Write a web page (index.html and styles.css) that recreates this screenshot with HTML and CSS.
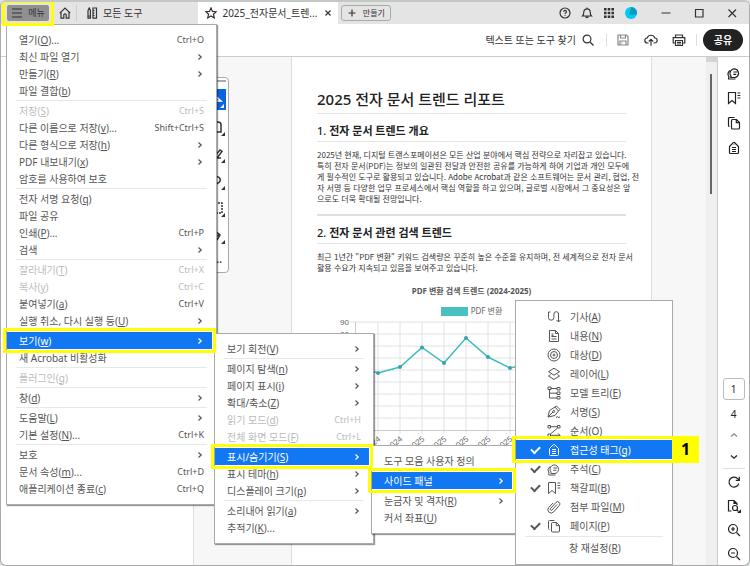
FILE: index.html
```html
<!DOCTYPE html>
<html lang="ko">
<head>
  <meta charset="UTF-8">
  <meta name="viewport" content="width=device-width, initial-scale=1.0">
  <title>2025_전자문서_트렌드</title>
  <link rel="stylesheet" href="styles.css">
</head>
<body>
  <!-- Shared icons -->
  <svg class="sprite" aria-hidden="true">
    <symbol id="chev" viewBox="0 0 6 8"><path d="M1.5 1.5 4.2 4 1.5 6.5"/></symbol>
    <symbol id="comment" viewBox="0 0 14 14"><path d="M4.200 10.300a4.300 4.300 0 1 1 3.800 1.200H4.200c-.6 0-.7-.4-.4-.8z"/><path d="M2.800 4.500A5 5 0 0 0 2 11l-.5 1.300c-.1.4.1.700.5.700h6.500M6.300 6h4M6.300 8.300h3"/></symbol>
    <symbol id="bookmark" viewBox="0 0 14 14"><path d="M1.5 1.5h7v11L5 9.500l-3.500 3zM10.500 2h2.800M10.500 4.500h2.800M10.500 7h2.800"/></symbol>
    <symbol id="pages" viewBox="0 0 14 14"><path d="M5.500 3.500h4l3 3v5.500a1 1 0 0 1-1 1h-6a1 1 0 0 1-1-1V4.500a1 1 0 0 1 1-1zM9.300 3.500v3.200h3.200M2.500 10.500a1 1 0 0 1-1-1v-7a1 1 0 0 1 1-1h5"/></symbol>
    <symbol id="tag" viewBox="0 0 14 14"><path d="M2.500 5.500 6.300 1.700a1 1 0 0 1 1.400 0l3.800 3.800v6a1 1 0 0 1-1 1h-7a1 1 0 0 1-1-1zM5 6.500h4M5 8.500h4M5 10.500h4M7 3.500v.6"/></symbol>
  </svg>

  <div class="window">
    <!-- Title bar -->
    <header class="titlebar">
      <div class="menu-frame marked">
        <button class="menu-btn">
          <svg class="icon" viewBox="0 0 12 12"><path d="M1 2h10M1 6h10M1 10h10"/></svg>메뉴
        </button>
      </div>
      <button class="home" aria-label="홈">
        <svg class="icon" viewBox="0 0 12 12"><path d="M.8 6.200 6 1l5.200 5.200M2 5.500v5.700h2.800V8a1.200 1.200 0 0 1 2.400 0v3.200H10V5.500"/></svg>
      </button>
      <button class="tools">
        <svg class="icon" viewBox="0 0 12 12"><path d="M2 3.500 3.200 1l1.200 2.500v7.700H2zM2 9h2.400M7 1h3.500v10.200H7zM7 3.500h1.500M7 6h1.500M7 8.500h1.500"/></svg>모든 도구
      </button>
      <div class="tab">
        <svg class="icon" viewBox="0 0 12 12"><path d="m6 .9 1.500 3.500 3.700.3-2.800 2.500.9 3.700L6 8.900l-3.300 2 .9-3.700L.8 4.700l3.700-.3z"/></svg>
        <span>2025_전자문서_트렌...</span>
        <button aria-label="탭 닫기"><svg class="icon tiny" viewBox="0 0 8 8"><path d="m1.500 1.500 5 5m0-5-5 5"/></svg></button>
      </div>
      <button class="create"><svg class="icon tiny" viewBox="0 0 8 8"><path d="M4 .5v7M.5 4h7"/></svg>만들기</button>

      <div class="account">
        <button aria-label="도움말"><svg class="icon" viewBox="0 0 12 12"><circle cx="6" cy="6" r="5"/><path d="M4.600 4.800a1.400 1.400 0 1 1 2.100 1.200c-.5.3-.7.500-.7 1M6 8.300v.7"/></svg></button>
        <button aria-label="알림"><svg class="icon" viewBox="0 0 12 12"><path d="M1.500 9c1.200-1 1.300-2 1.300-4a3.200 3.200 0 0 1 6.400 0c0 2 .1 3 1.300 4zM4.800 9.500a1.200 1.200 0 0 0 2.400 0M6 .6v1"/></svg></button>
        <button aria-label="앱"><svg class="icon solid" viewBox="0 0 12 12"><path d="M1 1h2.600v2.600H1zM4.700 1h2.600v2.600H4.700zM8.400 1H11v2.600H8.400zM1 4.700h2.600v2.600H1zM4.700 4.700h2.600v2.600H4.700zM8.400 4.700H11v2.600H8.400zM1 8.400h2.600V11H1zM4.700 8.400h2.600V11H4.700zM8.400 8.400H11V11H8.400z"/></svg></button>
        <button aria-label="프로필"><svg class="avatar" viewBox="0 0 12 12"><circle cx="6" cy="6" r="6" fill="#00c8f8"/><path d="M6 0a6 6 0 0 1 5.800 7.500L4 8z" fill="#0b9dbd"/></svg></button>
      </div>
      <div class="controls">
        <button aria-label="최소화"><svg class="icon" viewBox="0 0 12 12"><path d="M1.500 6h9"/></svg></button>
        <button aria-label="최대화"><svg class="icon" viewBox="0 0 12 12"><path d="M2.500 2.500h7.500v7.500H2.500z"/></svg></button>
        <button aria-label="닫기"><svg class="icon" viewBox="0 0 12 12"><path d="m2.500 2.500 7.500 7.500m0-7.500L2.500 10"/></svg></button>
      </div>
    </header>

    <!-- Toolbar -->
    <div class="toolbar">
      <button class="search">텍스트 또는 도구 찾기
        <svg class="icon" viewBox="0 0 12 12"><circle cx="5" cy="5" r="3.900"/><path d="m8 8 3.500 3.500"/></svg>
      </button>
      <button class="save" aria-label="저장"><svg class="icon" viewBox="0 0 12 12"><path d="M1 1h8.500L11 2.500V11H1zM3.500 1v3h5V1M3 11V7h6v4M5 8.500v1"/></svg></button>
      <button class="upload" aria-label="업로드"><svg class="icon wide" viewBox="0 0 14 12"><path d="M4.500 9H3.500a2.500 2.500 0 0 1-.3-5A4 4 0 0 1 10.800 4a2.500 2.500 0 0 1-.3 5h-1M7 11.800V5.500M4.800 7.500 7 5.300l2.200 2.200"/></svg></button>
      <button class="print" aria-label="인쇄"><svg class="icon wide" viewBox="0 0 14 12"><path d="M3.500 3.500V1h7v2.500M3.500 9H1.200V3.700h11.600V9h-2.300M3.500 6.500h7v5h-7zM5 8.300h4M5 10h4"/></svg></button>
      <button class="share">공유</button>
    </div>

    <div class="workspace">
      <aside class="left-pane"></aside>

      <main class="viewer">
        <!-- Quick tools -->
        <div class="quick-tools">
          <button class="on" aria-label="선택"><svg viewBox="0 0 18 20"><path d="M6 5v9l3-3h4z" class="line"/><path class="corner" d="M16 14v4h-4z"/></svg></button>
          <button aria-label="주석"><svg viewBox="0 0 18 20"><path d="M5 15h8V8a3 3 0 0 0-6 0" class="line"/><path class="corner" d="M17 15v4h-4z"/></svg></button>
          <button aria-label="형광펜"><svg viewBox="0 0 18 20"><path d="m5 14 7-8 2 1.500-5 6.500h4" class="line"/><path class="corner" d="M17 15v4h-4z"/></svg></button>
          <button aria-label="그리기"><svg viewBox="0 0 18 20"><path d="M6 7c4-3 7 0 6 3s-4 2-5 4" class="line"/><path class="corner" d="M17 15v4h-4z"/></svg></button>
          <button aria-label="텍스트 선택"><svg viewBox="0 0 18 20"><path d="M4 5h10v10H4z" class="line dash"/><path class="corner" d="M17 15v4h-4z"/></svg></button>
          <button aria-label="서명"><svg viewBox="0 0 18 20"><path d="m6 5 6 5-3 5m-3-2 6-4" class="line"/><path class="corner" d="M17 15v4h-4z"/></svg></button>
          <button class="more" aria-label="더 보기">···</button>
        </div>

        <!-- Document page -->
        <article class="page">
          <h1>2025 전자 문서 트렌드 리포트</h1>
          <h2><span>1.</span> 전자 문서 트렌드 개요</h2>
          <p>2025년 현재, 디지털 트랜스포메이션은 모든 산업 분야에서 핵심 전략으로 자리잡고 있습니다.<br>
            특히 전자 문서(PDF)는 정보의 일관된 전달과 안전한 공유를 가능하게 하여 기업과 개인 모두에<br>
            게 필수적인 도구로 활용되고 있습니다. Adobe Acrobat과 같은 소프트웨어는 문서 관리, 협업, 전<br>
            자 서명 등 다양한 업무 프로세스에서 핵심 역할을 하고 있으며, 글로벌 시장에서 그 중요성은 앞<br>
            으로도 더욱 확대될 전망입니다.</p>
          <hr>
          <h2><span>2.</span> 전자 문서 관련 검색 트렌드</h2>
          <p>최근 1년간 "PDF 변환" 키워드 검색량은 꾸준히 높은 수준을 유지하며, 전 세계적으로 전자 문서<br>
            활용 수요가 지속되고 있음을 보여주고 있습니다.</p>
          <figure>
            <figcaption>PDF 변환 검색 트렌드 (2024-2025)</figcaption>
            <div class="legend"><i></i>PDF 변환</div>
            <svg class="chart" viewBox="0 0 310 150">
              <path class="grid" d="M33 5h265M33 17h265M33 29h265M33 41h265M33 53h265M33 65h265M33 77h265M33 89h265M33 101h265M61 5v112M83 5v112M105 5v112M127 5v112M149 5v112M171 5v112M193 5v112M215 5v112M237 5v112M259 5v112M281 5v112"/>
              <path class="axis" d="M38.500 5v112M33 113.500h265"/>
              <g class="labels">
                <text x="32" y="8">90</text><text x="32" y="20">80</text>
                <text transform="translate(64 123) rotate(-38)">2024</text>
                <text transform="translate(86 123) rotate(-38)">2024</text>
                <text transform="translate(108 123) rotate(-38)">2025</text>
                <text transform="translate(130 123) rotate(-38)">2025</text>
                <text transform="translate(152 123) rotate(-38)">2025</text>
                <text transform="translate(174 123) rotate(-38)">2025</text>
                <text transform="translate(196 123) rotate(-38)">2025</text>
              </g>
              <path class="series" d="M39 50 61 56 83 50 105 30.500 127 46 149 21 171 40 193 51 215 46"/>
              <g class="points"><circle cx="61" cy="56" r="2"/><circle cx="83" cy="50" r="2"/><circle cx="105" cy="30.500" r="2"/><circle cx="127" cy="46" r="2"/><circle cx="149" cy="21" r="2"/><circle cx="171" cy="40" r="2"/><circle cx="193" cy="51" r="2"/></g>
            </svg>
          </figure>
        </article>
      </main>

      <div class="scrollbar"><i></i></div>

      <!-- Right rail -->
      <aside class="rail">
        <div class="panels">
          <button aria-label="주석"><svg class="icon"><use href="#comment"/></svg></button>
          <button aria-label="책갈피"><svg class="icon"><use href="#bookmark"/></svg></button>
          <button aria-label="페이지"><svg class="icon"><use href="#pages"/></svg></button>
          <button aria-label="접근성 태그"><svg class="icon"><use href="#tag"/></svg></button>
        </div>
        <div class="pager">
          <input type="text" value="1" aria-label="페이지 번호">
          <span>4</span>
          <button class="dim" aria-label="이전 페이지"><svg class="icon" viewBox="0 0 14 14"><path d="M4 8.500 7 5.700l3 2.800"/></svg></button>
          <button aria-label="다음 페이지"><svg class="icon" viewBox="0 0 14 14"><path d="M4 5.500 7 8.300l3-2.800"/></svg></button>
        </div>
        <div class="zoom">
          <button aria-label="회전"><svg class="icon" viewBox="0 0 14 14"><path d="M11.800 8.500A5 5 0 1 1 11 4l1 1.200M12.300 1.800v3.500H8.800"/></svg></button>
          <button aria-label="보기"><svg class="icon" viewBox="0 0 14 14"><path d="M4.500 12H1.500V1.500h5.500l3 3V6M7 1.500v3h3"/><circle cx="8" cy="9" r="2.500"/><path d="m9.800 10.800 1.700 1.700"/><path fill="currentColor" d="M13.500 11.500v2h-2z"/></svg></button>
          <button aria-label="확대"><svg class="icon" viewBox="0 0 14 14"><circle cx="6" cy="6" r="4.500"/><path d="m9.500 9.500 3.500 3.500M4 6h4M6 4v4"/></svg></button>
          <button aria-label="축소"><svg class="icon" viewBox="0 0 14 14"><circle cx="6" cy="6" r="4.500"/><path d="m9.500 9.500 3.500 3.500M4 6h4"/></svg></button>
        </div>
      </aside>
    </div>
  </div>

  <!-- Main menu -->
  <ul class="menu menu-main">
    <li><button>열기(<u>O</u>)...<kbd>Ctrl+O</kbd></button></li>
    <li><button>최신 파일 열기<svg class="chev"><use href="#chev"/></svg></button></li>
    <li><button>만들기(<u>R</u>)<svg class="chev"><use href="#chev"/></svg></button></li>
    <li><button>파일 결합(<u>b</u>)</button></li>
    <li class="sep"></li>
    <li><button disabled>저장(<u>S</u>)<kbd>Ctrl+S</kbd></button></li>
    <li><button>다른 이름으로 저장(<u>v</u>)...<kbd>Shift+Ctrl+S</kbd></button></li>
    <li><button>다른 형식으로 저장(<u>h</u>)<svg class="chev"><use href="#chev"/></svg></button></li>
    <li><button>PDF 내보내기(<u>x</u>)<svg class="chev"><use href="#chev"/></svg></button></li>
    <li><button>암호를 사용하여 보호</button></li>
    <li class="sep"></li>
    <li><button>전자 서명 요청(<u>q</u>)</button></li>
    <li><button>파일 공유</button></li>
    <li><button>인쇄(<u>P</u>)...<kbd>Ctrl+P</kbd></button></li>
    <li><button>검색<svg class="chev"><use href="#chev"/></svg></button></li>
    <li class="sep"></li>
    <li><button disabled>잘라내기(<u>T</u>)<kbd>Ctrl+X</kbd></button></li>
    <li><button disabled>복사(<u>y</u>)<kbd>Ctrl+C</kbd></button></li>
    <li><button>붙여넣기(<u>a</u>)<kbd>Ctrl+V</kbd></button></li>
    <li><button>실행 취소, 다시 실행 등(<u>U</u>)<svg class="chev"><use href="#chev"/></svg></button></li>
    <li class="sep"></li>
    <li class="active marked"><button>보기(<u>w</u>)<svg class="chev"><use href="#chev"/></svg></button></li>
    <li><button>새 Acrobat 비활성화</button></li>
    <li class="sep"></li>
    <li><button disabled>플러그인(<u>g</u>)</button></li>
    <li class="sep"></li>
    <li><button>창(<u>d</u>)<svg class="chev"><use href="#chev"/></svg></button></li>
    <li class="sep"></li>
    <li><button>도움말(<u>L</u>)<svg class="chev"><use href="#chev"/></svg></button></li>
    <li><button>기본 설정(<u>N</u>)...<kbd>Ctrl+K</kbd></button></li>
    <li class="sep"></li>
    <li><button>보호<svg class="chev"><use href="#chev"/></svg></button></li>
    <li><button>문서 속성(<u>m</u>)...<kbd>Ctrl+D</kbd></button></li>
    <li><button>애플리케이션 종료(<u>c</u>)<kbd>Ctrl+Q</kbd></button></li>
  </ul>

  <!-- View submenu -->
  <ul class="menu menu-view">
    <li><button>보기 회전(<u>V</u>)<svg class="chev"><use href="#chev"/></svg></button></li>
    <li class="sep"></li>
    <li><button>페이지 탐색(<u>n</u>)<svg class="chev"><use href="#chev"/></svg></button></li>
    <li><button>페이지 표시(<u>i</u>)<svg class="chev"><use href="#chev"/></svg></button></li>
    <li><button>확대/축소(<u>Z</u>)<svg class="chev"><use href="#chev"/></svg></button></li>
    <li><button disabled>읽기 모드(<u>d</u>)<kbd>Ctrl+H</kbd></button></li>
    <li><button disabled>전체 화면 모드(<u>F</u>)<kbd>Ctrl+L</kbd></button></li>
    <li class="sep"></li>
    <li class="active marked"><button>표시/숨기기(<u>S</u>)<svg class="chev"><use href="#chev"/></svg></button></li>
    <li><button>표시 테마(<u>h</u>)<svg class="chev"><use href="#chev"/></svg></button></li>
    <li><button>디스플레이 크기(<u>p</u>)<svg class="chev"><use href="#chev"/></svg></button></li>
    <li class="sep"></li>
    <li><button>소리내어 읽기(<u>a</u>)<svg class="chev"><use href="#chev"/></svg></button></li>
    <li><button>추적기(<u>K</u>)...</button></li>
  </ul>

  <!-- Show/hide submenu -->
  <ul class="menu menu-show">
    <li><button>도구 모음 사용자 정의</button></li>
    <li class="sep"></li>
    <li class="active marked"><button>사이드 패널<svg class="chev"><use href="#chev"/></svg></button></li>
    <li class="sep"></li>
    <li><button>눈금자 및 격자(<u>R</u>)<svg class="chev"><use href="#chev"/></svg></button></li>
    <li><button>커서 좌표(<u>U</u>)</button></li>
  </ul>

  <!-- Side panel list -->
  <ul class="menu menu-panels">
    <li><label><input type="checkbox"><svg class="icon" viewBox="0 0 14 14"><path d="M1.500 2v5.500a2.700 2.700 0 0 0 5.400 0V4a2.300 2.300 0 0 1 4.600 0v8M9.500 10l2 2 2-2M1.500 2h2"/></svg><span>기사(<u>A</u>)</span></label></li>
    <li><label><input type="checkbox"><svg class="icon" viewBox="0 0 14 14"><path d="M2.500 1.500h6l3 3v8h-9zM8.500 1.500v3h3M4.500 5h2M4.500 7.500h5M4.500 10h5M4.500 6.300h2"/></svg><span>내용(<u>N</u>)</span></label></li>
    <li><label><input type="checkbox"><svg class="icon" viewBox="0 0 14 14"><circle cx="7" cy="7" r="6"/><circle cx="7" cy="7" r="3.500"/><circle cx="7" cy="7" r="1"/></svg><span>대상(<u>D</u>)</span></label></li>
    <li><label><input type="checkbox"><svg class="icon" viewBox="0 0 14 14"><path d="m7 1.200 5.500 3.500L7 8.200 1.500 4.700zM3.500 7.500l-2 1.500L7 12.500 12.500 9l-2-1.500"/></svg><span>레이어(<u>L</u>)</span></label></li>
    <li><label><input type="checkbox"><svg class="icon" viewBox="0 0 14 14"><path d="M1 1h3v2.500H1zM10 1.500h3V4h-3zM10 6h3v2.500h-3zM10 10.500h3V13h-3zM2.500 3.500V12H10M2.500 7.200H10M4 2.500h6"/></svg><span>모델 트리(<u>E</u>)</span></label></li>
    <li><label><input type="checkbox"><svg class="icon" viewBox="0 0 14 14"><path d="m1 12 1.500-6.500L8 2l3.500 4L8 10.500zM8 2l1.500-1L13 4.500 11.500 6M1 12l5-5M9 12.500l1.500-1 .7 1 1.800-.5"/><circle cx="6.700" cy="6.500" r="1"/></svg><span>서명(<u>S</u>)</span></label></li>
    <li><label><input type="checkbox"><svg class="icon" viewBox="0 0 14 14"><path d="M1 1.500h2.500V4H1zM10.500 1.500H13V4h-2.500zM1 10h2.500v2.500H1zM3.500 2.700h7M10.500 4l-7 6M3.500 11.300H13M11 9.300l2 2-2 2"/></svg><span>순서(<u>O</u>)</span></label></li>
    <li class="active marked"><label><input type="checkbox" checked><svg class="icon"><use href="#tag"/></svg><span>접근성 태그(<u>g</u>)</span></label><b class="step">1</b></li>
    <li><label><input type="checkbox" checked><svg class="icon"><use href="#comment"/></svg><span>주석(<u>C</u>)</span></label></li>
    <li><label><input type="checkbox" checked><svg class="icon"><use href="#bookmark"/></svg><span>책갈피(<u>B</u>)</span></label></li>
    <li><label><input type="checkbox"><svg class="icon" viewBox="0 0 14 14"><path d="m10 4.500-5 5.500a1 1 0 0 1-1.500-1.500L9 2.500a2.200 2.200 0 0 1 3.300 3L6.500 12A3.200 3.200 0 0 1 1.800 7.500L6 3"/></svg><span>첨부 파일(<u>M</u>)</span></label></li>
    <li><label><input type="checkbox" checked><svg class="icon"><use href="#pages"/></svg><span>페이지(<u>P</u>)</span></label></li>
    <li class="sep"></li>
    <li><button>창 재설정(<u>R</u>)</button></li>
  </ul>
</body>
</html>
```

FILE: styles.css
```css
* {
  box-sizing: border-box;
}
body {
  margin: 0;
  height: 100vh;
  overflow: hidden;
  position: relative;
  background: #e0e4e0;
  color: #333;
  font-family: "Noto Sans", "Noto Sans CJK KR", sans-serif;
  font-size: 10px;
  line-height: 16px;
}
button, input {
  font: inherit;
  color: inherit;
}
button {
  display: flex;
  align-items: center;
  justify-content: center;
  padding: 0;
  border: 0;
  background: none;
  white-space: nowrap;
}
ul, h1, h2, p, figure {
  margin: 0;
  padding: 0;
}
.sprite {
  position: absolute;
  width: 0;
  height: 0;
}
.icon {
  flex: none;
  width: 12px;
  height: 12px;
  fill: none;
  stroke: currentColor;
  stroke-width: 1.2;
}
.icon.tiny {
  width: 8px;
  height: 8px;
}
.icon.wide {
  width: 14px;
}
.icon.solid {
  fill: currentColor;
  stroke: none;
}
/* yellow guide frame */
.marked {
  position: relative;
  z-index: 5;
  outline: 3px solid #ff0;
  outline-offset: 1px;
}

/* Window */
.window {
  height: 100%;
  display: flex;
  flex-direction: column;
  border: 1px solid #aaa;
  border-top: 2px solid #c4c8c4;
  border-radius: 6px;
  background: #fff;
  overflow: hidden;
}
.titlebar {
  display: flex;
  align-items: center;
  flex: none;
  height: 22px;
  background: #e4e4e4;
}
.menu-frame {
  margin-left: 5px;
  padding: 1px;
}
.menu-btn {
  gap: 5px;
  width: 42px;
  height: 16px;
  border-radius: 2px;
  background: #909090;
  font-size: 9px;
}
.home {
  width: 27px;
  height: 16px;
  padding-left: 4px;
  border-right: 1px solid #ccc;
}
.tools {
  gap: 5px;
  margin: 0 56px 0 9px;
}
.tab {
  display: flex;
  align-items: center;
  gap: 5px;
  width: 140px;
  height: 22px;
  padding: 0 6px 0 7px;
  background: #fff;
  white-space: nowrap;
}
.tab button {
  margin-left: auto;
}
.create {
  gap: 7px;
  width: 50px;
  height: 16px;
  margin-left: 3px;
  border: 1px solid #aaa;
  border-radius: 3px;
  font-size: 8px;
}
.account, .controls {
  display: flex;
}
.account {
  gap: 10px;
  margin-left: auto;
}
.avatar {
  width: 12px;
  height: 12px;
}
.controls {
  gap: 21px;
  margin: 0 11px 0 23px;
}
.toolbar {
  display: flex;
  align-items: center;
  justify-content: flex-end;
  flex: none;
  height: 33px;
  padding-right: 6px;
  border-bottom: 1px solid #ccc;
}
.toolbar .search {
  gap: 6px;
  height: 12px;
  padding-right: 12px;
  border-right: 1px solid #ddd;
}
.toolbar .save {
  margin-left: 10px;
  color: #888;
}
.toolbar .upload {
  margin-left: 15px;
}
.toolbar .print {
  height: 12px;
  margin: 0 6px 0 14px;
  padding-right: 10px;
  border-right: 1px solid #ddd;
}
.share {
  width: 40px;
  height: 22px;
  border-radius: 11px;
  background: #222;
  color: #fff;
  font-weight: bold;
}

/* Workspace */
.workspace {
  display: flex;
  flex: 1;
  min-height: 0;
}
.left-pane {
  flex: none;
  width: 193px;
  border-right: 1px solid #ddd;
}
.viewer {
  position: relative;
  display: flex;
  flex: 1;
  min-width: 0;
  background: #f7f7f7;
}
.quick-tools {
  position: absolute;
  top: 20px;
  left: 2px;
  width: 33px;
  height: 196px;
  padding: 11px 2px 0;
  border: 1px solid #aaa;
  border-radius: 4px;
  background: #fff;
}
.quick-tools::before {
  content: "";
  position: absolute;
  top: 2px;
  left: 6px;
  right: 2px;
  height: 2px;
  background: #aaa;
}
.quick-tools button {
  justify-content: flex-end;
  width: 100%;
  height: 21px;
  margin-bottom: 6px;
}
.quick-tools .on {
  background: #0a63e0;
  color: #fff;
}
.quick-tools .more {
  padding-right: 4px;
  font-weight: bold;
}
.quick-tools svg {
  width: 18px;
  height: 20px;
}
.quick-tools .line {
  fill: none;
  stroke: currentColor;
  stroke-width: 1.5;
}
.quick-tools .dash {
  stroke-dasharray: 2 1;
}
.quick-tools .corner {
  fill: currentColor;
}

/* Document */
.page {
  flex: 1;
  min-width: 0;
  margin: 0 54px 0 97px;
  padding: 30px 25px 0;
  border: solid #ddd;
  border-width: 0 1px;
  background: #fff;
  color: #333;
  white-space: nowrap;
}
.page h1 {
  padding-bottom: 2px;
  border-bottom: 1px solid #e4e4e4;
  color: #222;
  font-size: 15px;
  font-weight: 500;
  line-height: 24px;
}
.page h2 {
  margin-top: 9px;
  padding-bottom: 2px;
  border-bottom: 1px solid #e4e4e4;
  color: #222;
  font-size: 11px;
  font-weight: bold;
  line-height: 16px;
}
.page h2 span {
  font-weight: 500;
}
.page p {
  margin-top: 7px;
  font-family: "Noto Sans CJK KR", sans-serif;
  font-size: 8px;
  line-height: 11px;
}
.page hr {
  height: 2px;
  margin: 10px 0 0;
  border: 0;
  background: #dde1e5;
}
figure {
  margin-top: 12px;
  text-align: center;
}
figcaption {
  color: #555;
  font-size: 8px;
  font-weight: bold;
  line-height: 12px;
}
.legend {
  display: flex;
  align-items: center;
  justify-content: center;
  gap: 3px;
  height: 12px;
  margin-top: 8px;
  color: #666;
  font-size: 8px;
}
.legend i {
  width: 27px;
  height: 9px;
  background: #4bc0c0;
}
.chart {
  display: block;
  width: 310px;
  height: 150px;
}
.chart .grid {
  stroke: #e2e2e2;
}
.chart .axis {
  stroke: #ccc;
}
.chart .series {
  fill: none;
  stroke: #3dbdbb;
  stroke-width: 1.5;
}
.chart .points {
  fill: #3aa3ae;
}
.chart .labels {
  fill: #666;
  font-family: "Liberation Sans", sans-serif;
  font-size: 8px;
  text-anchor: end;
}

.scrollbar {
  flex: none;
  width: 12px;
  border-right: 1px solid #ccc;
  border-top: 5px solid #d4d4d4;
  background: #efefef;
}
.scrollbar i {
  display: block;
  width: 2px;
  height: 120px;
  margin: 12px 0 0 4px;
  background: #666;
}
.rail {
  display: flex;
  flex-direction: column;
  flex: none;
  align-items: center;
  width: 31px;
  color: #222;
}
.rail .icon {
  width: 14px;
  height: 14px;
}
.panels, .pager, .zoom {
  display: flex;
  flex-direction: column;
  align-items: center;
}
.panels {
  gap: 11px;
  padding-top: 9px;
}
.pager {
  gap: 8px;
  margin-top: auto;
  padding-bottom: 4px;
  border-bottom: 1px solid #ddd;
}
.pager input {
  width: 22px;
  height: 22px;
  padding: 0;
  border: 1px solid #bbb;
  border-radius: 3px;
  text-align: center;
}
.pager span {
  line-height: 12px;
}
.pager .dim {
  color: #888;
}
.zoom {
  gap: 10px;
  padding: 6px 0 4px;
}

/* Menus */
.menu {
  position: absolute;
  padding: 6px 0 7px;
  border: 1px solid #aaa;
  background: #fff;
  box-shadow: 1px 1px 1px rgba(0, 0, 0, 0.4);
  color: #555;
  list-style: none;
}
.menu-main {
  top: 24px;
  left: 6px;
  width: 211px;
}
.menu-view {
  top: 333px;
  left: 214px;
  width: 160px;
}
.menu-show {
  top: 445px;
  left: 371px;
  width: 146px;
}
.menu-panels {
  top: 300px;
  left: 515px;
  width: 158px;
  box-shadow: none;
}
.menu li {
  height: 17px;
}
.menu .sep {
  height: 1px;
  margin: 1px 9px;
  background: #e8e8e8;
}
.menu button, .menu label {
  display: flex;
  align-items: center;
  justify-content: flex-start;
  width: 100%;
  height: 100%;
  padding: 0 12px;
}
.menu button:disabled {
  color: #bbb;
}
.menu u {
  text-underline-offset: 1px;
}
.menu kbd {
  margin-left: auto;
  font-family: inherit;
  font-size: 9px;
}
.chev {
  width: 6px;
  height: 8px;
  margin-left: auto;
  fill: none;
  stroke: currentColor;
  stroke-width: 1.2;
}
.menu-main .chev, .menu-view .chev {
  margin-right: 1px;
}
.menu .active {
  margin-right: 4px;
  background: #1277f2;
  color: #fff;
}
.menu .active button {
  padding-right: 8px;
}
.menu-panels li {
  height: 19px;
}
.menu-panels label {
  padding-left: 15px;
  white-space: nowrap;
}
.menu-panels .icon {
  width: 14px;
  height: 14px;
  margin: 0 9px;
  stroke-width: 1;
}
.menu-panels button {
  padding-left: 53px;
}
.menu-panels input {
  appearance: none;
  flex: none;
  width: 7px;
  height: 7px;
  margin: 0;
}
.menu-panels input:checked::before {
  content: "";
  display: block;
  width: 7px;
  height: 4px;
  border: solid currentColor;
  border-width: 0 0 2px 2px;
  transform: rotate(-45deg);
}
.menu-panels .active {
  margin-right: 0;
}
/* step number attached to the frame */
.step {
  position: absolute;
  top: -4px;
  bottom: -4px;
  left: 100%;
  width: 27px;
  background: #ff0;
  color: #000;
  font-size: 16px;
  line-height: 27px;
  text-align: center;
}
```
